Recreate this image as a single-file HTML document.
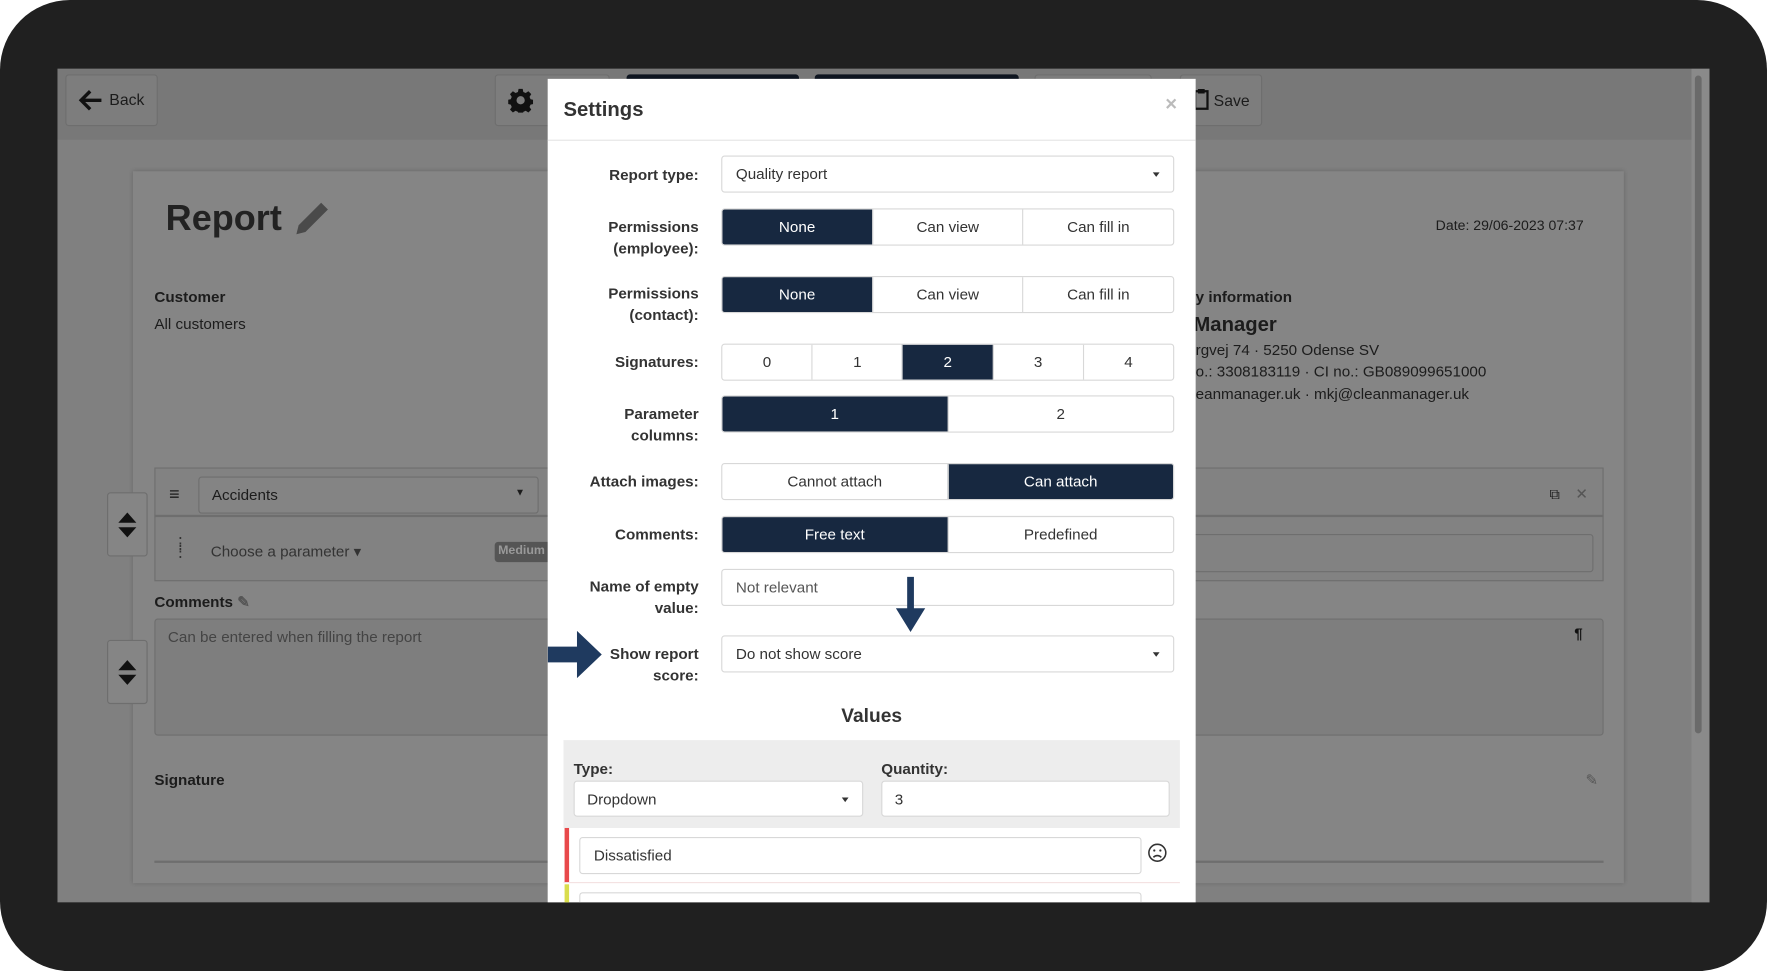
<!DOCTYPE html>
<html><head><meta charset="utf-8"><style>
*{box-sizing:border-box;margin:0;padding:0}
html,body{width:1767px;height:971px;overflow:hidden;background:#fff;font-family:"Liberation Sans",sans-serif}
#s{position:absolute;left:0;top:0;width:1568px;height:862px;transform:scale(1.12691,1.1265);transform-origin:0 0}
.a{position:absolute}
.frame{left:0;top:0;width:1568px;height:862px;background:#202020;border-radius:62px}
.screen{left:51px;top:61px;width:1466px;height:740px;background:#808080;overflow:hidden}
.t{color:#1c1c1c;font-size:13.5px;white-space:nowrap}
.btn{border:1px solid #6e6e6e;border-radius:3px;background:#7d7d7d}
.modal{left:486px;top:70px;width:575px;height:731px;background:#fff;overflow:hidden}
.lbl{position:absolute;right:441px;width:140px;text-align:right;font-weight:bold;font-size:13.5px;color:#333;line-height:19px;white-space:nowrap}
.ctl{position:absolute;left:154px;width:402px;height:33px;border:1px solid #d8d8d8;border-radius:3px;display:flex;overflow:hidden}
.ctl div{flex:1;display:flex;align-items:center;justify-content:center;font-size:13.5px;color:#333;border-left:1px solid #d8d8d8}
.ctl div:first-child{border-left:none}
.ctl .on{background:#172840;color:#fff}
.inp{align-items:center;padding-left:12px;font-size:13.5px;color:#333}
.caret{position:absolute;right:12px;top:14px;width:0;height:0;border-left:3.5px solid transparent;border-right:3.5px solid transparent;border-top:4px solid #333}
</style></head><body><div id="s">
<div class="a frame"></div>
<div class="a screen">
  <div class="a" style="left:0;top:0;width:1466px;height:63px;background:#787878"></div>
  <div class="a" style="left:1450px;top:0;width:16px;height:740px;background:#8a8a8a"></div>
  <div class="a" style="left:1453px;top:6px;width:6px;height:584px;background:#6a6a6a;border-radius:3px"></div>
  <div class="a btn" style="left:7px;top:5px;width:82px;height:46px"></div>
  <svg class="a" style="left:18px;top:18px" width="22" height="20" viewBox="0 0 22 20"><path d="M11 2 3 10l8 8M3 10h18" stroke="#111" stroke-width="3" fill="none"/></svg>
  <div class="a t" style="left:46px;top:19px;font-size:14px">Back</div>
  <div class="a btn" style="left:388px;top:5px;width:102px;height:46px"></div>
  <svg class="a" style="left:400px;top:17px" width="22" height="22" viewBox="0 0 24 24"><path fill="#111" d="M10 1h4l.6 3 2.3 1 2.6-1.7 2.8 2.8-1.7 2.6 1 2.3 3 .6v4l-3 .6-1 2.3 1.7 2.6-2.8 2.8-2.6-1.7-2.3 1-.6 3h-4l-.6-3-2.3-1-2.6 1.7-2.8-2.8 1.7-2.6-1-2.3-3-.6v-4l3-.6 1-2.3-1.7-2.6 2.8-2.8 2.6 1.7 2.3-1zM12 8a4 4 0 1 0 0 8 4 4 0 0 0 0-8z"/></svg>
  <div class="a" style="left:505px;top:5px;width:153px;height:10px;background:#0e1520;border-radius:3px"></div>
  <div class="a" style="left:672px;top:5px;width:181px;height:10px;background:#0e1520;border-radius:3px"></div>
  <div class="a btn" style="left:867px;top:5px;width:104px;height:46px"></div>
  <div class="a btn" style="left:996px;top:5px;width:73px;height:46px"></div>
  <svg class="a" style="left:1008px;top:17px" width="14" height="20" viewBox="0 0 14 20"><path d="M1.5 3h11v15.5h-11z" fill="none" stroke="#111" stroke-width="2"/><path d="M4 1h6v4H4z" fill="#111"/></svg>
  <div class="a t" style="left:1026px;top:20px;font-size:14px">Save</div>
  <div class="a" style="left:67px;top:91px;width:1323px;height:632px;background:#858585;box-shadow:0 0 4px rgba(0,0,0,.2)"></div>
  <div class="a t" style="left:96px;top:114px;font-size:32px;font-weight:bold;color:#222">Report</div>
  <svg class="a" style="left:206px;top:117px" width="36" height="36" viewBox="0 0 36 36"><path d="M28 2l6 6L14 28l-8 2 2-8z" fill="#4a4a4a"/></svg>
  <div class="a t" style="left:1223px;top:132px;font-size:12.5px">Date: 29/06-2023 07:37</div>
  <div class="a t" style="left:86px;top:195px;font-weight:bold">Customer</div>
  <div class="a t" style="left:86px;top:219px">All customers</div>
  <div class="a t" style="left:1010px;top:195px;font-weight:bold">y information</div>
  <div class="a t" style="left:1008px;top:217px;font-size:18px;font-weight:bold">Manager</div>
  <div class="a t" style="left:1010px;top:242px">rgvej 74 · 5250 Odense SV</div>
  <div class="a t" style="left:1010px;top:261px">o.: 3308183119 · CI no.: GB089099651000</div>
  <div class="a t" style="left:1010px;top:281px">eanmanager.uk · mkj@cleanmanager.uk</div>
  <div class="a" style="left:86px;top:354px;width:1286px;height:101px;border:1px solid #6e6e6e;background:#828282"></div>
  <div class="a" style="left:86px;top:396px;width:1286px;height:2px;background:#6e6e6e"></div>
  <div class="a t" style="left:99px;top:370px;font-size:16px">≡</div>
  <div class="a btn" style="left:125px;top:362px;width:302px;height:33px;background:#848484"></div>
  <div class="a t" style="left:137px;top:371px">Accidents</div>
  <div class="a t" style="left:406px;top:371px;font-size:9px">▼</div>
  <div class="a t" style="left:102px;top:418px;font-size:14px;line-height:7px;color:#333">⋮<br>⋮</div>
  <div class="a t" style="left:136px;top:421px;color:#333">Choose a parameter ▾</div>
  <div class="a" style="left:388px;top:420px;width:50px;height:18px;background:#555;border-radius:3px;color:#999;font-size:11px;font-weight:bold;padding:2px 3px">Medium</div>
  <div class="a" style="left:990px;top:413px;width:373px;height:34px;border:1px solid #6e6e6e;border-radius:3px"></div>
  <div class="a t" style="left:1324px;top:370px;font-size:13px">⧉</div>
  <div class="a t" style="left:1347px;top:370px;color:#555">✕</div>
  <div class="a btn" style="left:44px;top:376px;width:36px;height:57px;background:#858585"></div>
  <svg class="a" style="left:53px;top:393px" width="18" height="24" viewBox="0 0 18 24"><path d="M9 1l8 9H1zM9 23l8-9H1z" fill="#111"/></svg>
  <div class="a btn" style="left:44px;top:507px;width:36px;height:57px;background:#858585"></div>
  <svg class="a" style="left:53px;top:524px" width="18" height="24" viewBox="0 0 18 24"><path d="M9 1l8 9H1zM9 23l8-9H1z" fill="#111"/></svg>
  <div class="a t" style="left:86px;top:466px;font-weight:bold">Comments <span style="color:#555">✎</span></div>
  <div class="a" style="left:86px;top:488px;width:1286px;height:104px;border:1px solid #6e6e6e;background:#7e7e7e;border-radius:3px"></div>
  <div class="a t" style="left:98px;top:497px;color:#444">Can be entered when filling the report</div>
  <div class="a t" style="left:1346px;top:494px;color:#111;font-weight:bold">¶</div>
  <div class="a t" style="left:86px;top:624px;font-weight:bold">Signature</div>
  <div class="a t" style="left:1356px;top:624px;color:#555">✎</div>
  <div class="a" style="left:86px;top:703px;width:1286px;height:2px;background:#6e6e6e"></div>
</div>
<div class="a modal">
  <div class="a" style="left:14px;top:17px;font-size:18px;font-weight:bold;color:#333">Settings</div>
  <div class="a" style="left:548px;top:12px;font-size:18px;color:#bbb;font-weight:bold">×</div>
  <div class="a" style="left:0;top:54px;width:575px;height:1px;background:#e5e5e5"></div>

  <div class="lbl" style="top:76px">Report type:</div>
  <div class="ctl inp" style="top:68px">Quality report<span class="caret"></span></div>

  <div class="lbl" style="top:122px">Permissions<br>(employee):</div>
  <div class="ctl" style="top:115px"><div class="on">None</div><div>Can view</div><div>Can fill in</div></div>

  <div class="lbl" style="top:181px">Permissions<br>(contact):</div>
  <div class="ctl" style="top:175px"><div class="on">None</div><div>Can view</div><div>Can fill in</div></div>

  <div class="lbl" style="top:242px">Signatures:</div>
  <div class="ctl" style="top:235px"><div>0</div><div>1</div><div class="on">2</div><div>3</div><div>4</div></div>

  <div class="lbl" style="top:288px">Parameter<br>columns:</div>
  <div class="ctl" style="top:281px"><div class="on">1</div><div>2</div></div>

  <div class="lbl" style="top:348px">Attach images:</div>
  <div class="ctl" style="top:341px"><div>Cannot attach</div><div class="on">Can attach</div></div>

  <div class="lbl" style="top:395px">Comments:</div>
  <div class="ctl" style="top:388px"><div class="on">Free text</div><div>Predefined</div></div>

  <div class="lbl" style="top:441px">Name of empty<br>value:</div>
  <div class="ctl inp" style="top:435px;color:#555">Not relevant</div>

  <div class="lbl" style="top:501px">Show report<br>score:</div>
  <div class="ctl inp" style="top:494px">Do not show score<span class="caret"></span></div>

  <svg class="a" style="left:300px;top:442px" width="44" height="50" viewBox="0 0 44 50"><path d="M19 0h6v28h10L22 49 9 28h10z" fill="#1f3a5f"/></svg>
  <svg class="a" style="left:0;top:488px" width="52" height="46" viewBox="0 0 52 46"><path d="M0 16h26V2l22 21-22 21V30H0z" fill="#1f3a5f"/></svg>

  <div class="a" style="left:0;top:556px;width:575px;text-align:center;font-size:17px;font-weight:bold;color:#333">Values</div>
  <div class="a" style="left:14px;top:587px;width:547px;height:78px;background:#ededed"></div>
  <div class="a" style="left:23px;top:605px;font-size:13.5px;font-weight:bold;color:#333">Type:</div>
  <div class="a" style="left:296px;top:605px;font-size:13.5px;font-weight:bold;color:#333">Quantity:</div>
  <div class="ctl inp" style="left:23px;top:623px;width:257px;height:32px;background:#fff;padding-left:11px">Dropdown<span class="caret"></span></div>
  <div class="ctl inp" style="left:296px;top:623px;width:256px;height:32px;background:#fff;padding-left:11px">3</div>
  <div class="a" style="left:15px;top:665px;width:4px;height:48px;background:#e8494b"></div>
  <div class="a" style="left:15px;top:715px;width:4px;height:30px;background:#d9dd4c"></div>
  <div class="a" style="left:14px;top:713px;width:547px;height:1px;background:#f3e0e0"></div>
  <div class="ctl inp" style="left:28px;top:673px;width:499px;height:33px">Dissatisfied</div>
  <div class="ctl inp" style="left:28px;top:722px;width:499px;height:33px"></div>
  <svg class="a" style="left:532px;top:678px" width="18" height="18" viewBox="0 0 18 18"><circle cx="9" cy="9" r="7.5" fill="none" stroke="#333" stroke-width="1.4"/><circle cx="6.3" cy="7" r="1" fill="#333"/><circle cx="11.7" cy="7" r="1" fill="#333"/><path d="M5.5 13c2-2 5-2 7 0" stroke="#333" stroke-width="1.4" fill="none"/></svg>
</div>
</div></body></html>
